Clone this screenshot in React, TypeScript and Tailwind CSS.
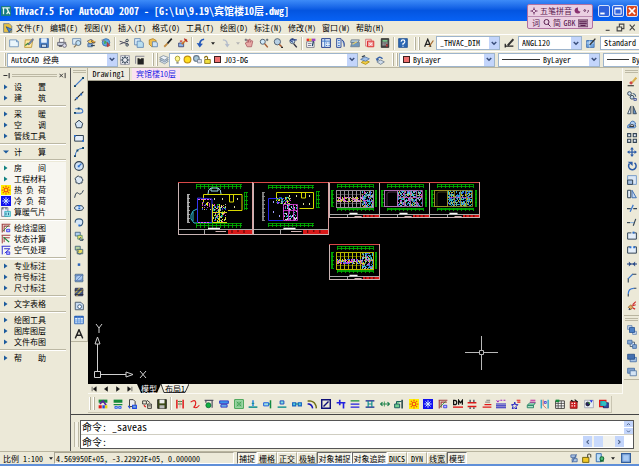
import { type ReactNode } from "react";
import clsx from "clsx";

/* ---------- icons ---------- */

// One stroke or shape: path data, stroke colour, fill colour, stroke width (16-unit grid)
type Shape = [string, string?, string?, number?];
type IconDef = [string, Shape[]];

const N = "none";
const NAVY = "#27408b";
const INK = "#222";
const BLUE = "#3f78c8";

const wide = "M1 3h11l3 3v8H1z";

const fileIcons: IconDef[] = [
  ["New", [[wide, "#5b86b5", "#eaf6fb"], ["M12 3v3h3", "#5b86b5", "#a8d8e8"]]],
  ["Open", [["M2 3h12l-2 12H1z", "#b08820", "#ffe9a0"], ["M14 1L6 10l2 1 7-8z", "#557", "#7fa3c7"], ["M2 12l5-4", "#3a8a3a", N, 2]]],
  ["Save", [["M1 1h14v14H1z", "#2a5aa0", "#4f86cc"], ["M4 1h8v6H4z", "#dbe9f8", "#e8f2fc"], ["M4 10h8v5H4z", "#1c3c70", "#c8dcf0"]]],
];
const printIcons: IconDef[] = [
  ["Plot", [["M4 1h7v6H4z", "#667", "#fff"], ["M1 7h13v5H1z", "#556", "#c6ccda"], ["M9 12a3 3 0 106 0a3 3 0 10-6 0", "#556", "#dde"], ["M3 13h5", "#445", N, 2]]],
  ["Plot preview", [["M1 1h13v9H1z", "#5b7fae", "#dcecf8"], ["M6 8a4 4 0 108 0a4 4 0 10-8 0", "#456", "#bfe0f6"], ["M7 11l-4 4", "#875", N, 2]]],
  ["Publish", [["M2 5l6-3 5 4-6 4z", "#557", "#f4d060"], ["M3 9h7v5H3z", "#335a90", "#8fb4de"], ["M10 3a3 3 0 105 3", "#334", "#e0a030"], ["M8 12h6", "#345", N, 2]]],
  ["Web", [["M2 7a6 6 0 1012 0a6 6 0 10-12 0", "#2a62a8", "#5fa8e0"], ["M5 4q4 0 4 4l-4 2z", N, "#3fae57"], ["M10 7l4 5-4 2z", "#933", "#e04848"], ["M1 3l5 2", "#889", N, 2]]],
];
const editIcons: IconDef[] = [
  ["Cut", [["M1 5l14 5M1 10l13-5", "#556", N, 1.6], ["M11 4a2 2 0 104 0a2 2 0 10-4 0M11 11a2 2 0 104 0a2 2 0 10-4 0", "#345", N, 1.5]]],
  ["Copy", [["M1 1h9v10H1z", "#4f79ac", "#dceefa"], ["M5 5h7l3 3v7H5z", "#4f79ac", "#b8def0"]]],
  ["Paste", [["M2 3l6-2 5 3v8l-7 2-4-4z", "#a87818", "#f0bf50"], ["M7 6h6l2 2v6H7z", "#4f79ac", "#cfe4f6"]]],
  ["Match properties", [["M14 1l-7 8", "#222", N, 2.6], ["M7 9l-5 5", "#c08a40", N, 3]]],
  ["Block editor", [["M1 8h8v6H1z", "#336", "#8cb4e8"], ["M14 2L6 10", "#d07020", N, 2.6], ["M10 1l5 5", "#b02020", N, 2], ["M3 5h4", "#c33", N, 2]]],
];
const undoIcon: IconDef = ["Undo", [["M13 2Q5 3 6 13", "#2458b8", N, 2.8], ["M1 8l5 7 5-6z", N, "#2458b8"]]];
const redoIcon: IconDef = ["Redo", [["M3 3Q11 3 10 13", "#b4bccb", N, 2.2], ["M6 9l4 6 4-5z", N, "#b4bccb"]]];
const viewIcons: IconDef[] = [
  ["Pan", [["M5 14L2 8l2-1 1 1V3h2v4l1-5h2v5l2-3 2 1-2 9z", "#a85860", "#e8a8a4"], ["M1 3h4M3 1v4", "#556", N, 1.3]]],
  ["Zoom realtime", [["M2 6a4 4 0 108 0a4 4 0 10-8 0", "#567", "#cfe8f8", 1.6], ["M9 9l5 6", "#a55a30", N, 2.4], ["M11 3h4M13 1v4", "#345", N, 1.2]]],
  ["Zoom window", [["M2 6a5 5 0 1010 0a5 5 0 10-10 0", "#567", "#b8d0e4", 1.6], ["M10 10l4 4", "#a55a30", N, 2.4], ["M13 15h3", INK, N, 2]]],
  ["Zoom previous", [["M3 5a4 4 0 108 0a4 4 0 10-8 0", "#567", "#cfe8f8", 1.6], ["M9 9l5 6", "#334", N, 2.4], ["M14 3H6M8 1L4 4l4 3", NAVY, N, 1.8]]],
];
const paletteIcons: IconDef[] = [
  ["Properties", [["M1 1h4v4H1z", N, "#e33"], ["M5 1h4v4H5z", N, "#e6c020"], ["M9 1h6v4H9z", N, "#a040c0"], ["M1 6h12v9H1z", "#667", "#fff"], ["M3 9h6M3 12h5", "#557"], ["M12 5l-2 8", "#246", N, 2]]],
  ["DesignCenter", [["M1 1h14v14H1z", NAVY, "#e4effb", 1.6], ["M6 1v14M1 5h14M8 8h2M12 8h2M8 12h2M12 12h2", BLUE, N, 1.6]]],
  ["Tool palettes", [["M1 1h7v14H1z", NAVY, "#dceafa", 1.4], ["M3 4h3M3 8h3M3 12h3", BLUE, N, 1.6], ["M9 3q5 1 4 11", NAVY, "#90b4e4", 1.6]]],
  ["Sheet set manager", [["M2 3h13l-2 4H1z", "#567", "#bcd8ea"], ["M3 7h12v7H1z", "#678", "#7098bc"], ["M4 10l7-4", "#e8d070", N, 2]]],
  ["Markup", [["M1 2h9v11H1z", "#c66", "#fbdcdc"], ["M4 5h10v9H4z", "#d33", "#f0a0a0", 1.6], ["M7 8l4 4M11 8l-4 4", "#fff", N, 1.4]]],
  ["QuickCalc", [["M2 1h12v14H2z", "#222", "#444"], ["M4 3h8v3H4z", N, "#7cc48c"], ["M4 8h2M7 8h2M10 8h2M4 11h2M7 11h2", "#eee", N, 1.6], ["M10 12h2", "#e33", N, 3]]],
];
const helpIcon: IconDef = ["Help", [["M1 1h14v14H1z", "#1b4a8c", "#2d68b4"], ["M5 6q0-3 3-3t3 3q0 2-3 3v2M8 12.500v1.500", "#fff", N, 1.8]]];

const styleText: IconDef = ["Text style", [["M1 14L6 2l5 12M3 10h6", INK, N, 2], ["M15 4l-7 10", "#a86a30", N, 2]]];
const styleDim: IconDef = ["Dimension style", [["M1 13h14M2 9v6", INK, N, 2], ["M15 2L6 12", "#333", N, 3]]];
const styleTable: IconDef = ["Table style", [["M1 4h12v11H1z", "#2b5fa8", "#74a8e0"], ["M1 8h12M6 4v11", "#dbe9f8"], ["M15 1L6 11", "#333", N, 2.2]]];

const gearIcon: IconDef = ["Workspace settings", [["M1 1h14v14H1z", "#889", "#e8eaf0"], ["M4 8a4 4 0 108 0a4 4 0 10-8 0M8 1v3M8 12v3M1 8h3M12 8h3M3 3l2 2M11 11l2 2M13 3l-2 2M5 11l-2 2", "#345", N, 1.5]]];
const myWorkspace: IconDef = ["My workspace", [["M1 2h14M1 2v12", "#778", N, 1.4], ["M4 5h3l1 2 2-2h4v10H4z", N, "#222"]]];
const layersIcon: IconDef = ["Layer manager", [["M1 10l6-3 8 3-6 4z", "#789", "#dfe8f4"], ["M1 7l6-3 8 3-6 4z", "#789", "#b8c8dc"], ["M1 4l6-3 8 3-6 4z", "#789", "#eef3f8"]]];
const layerCurrent: IconDef = ["Make object layer current", [["M2 12l6-4 7 3-6 4z", "#a80", "#f0cc48"], ["M1 7l7-4 7 3-6 4z", "#456ea8", "#a0c0e8"], ["M3 3l5-2", "#345", N, 2]]];
const layerPrev: IconDef = ["Layer previous", [["M3 11l6-3 6 3-6 4z", "#678", "#cfdcec"], ["M12 6Q7 1 3 7", "#3a64a8", N, 2.4], ["M1 5l2 5 4-3z", N, "#3a64a8"]]];

const drawIcons: IconDef[] = [
  ["Line", [["M1 15L15 1", BLUE, N, 2], ["M0 13h3v3H0zM13 0h3v3h-3z", N, "#146"]]],
  ["Construction line", [["M1 15L15 1", INK, N, 1.8], ["M3 10h3v3H3zM10 4h3v3h-3z", N, "#2a70d0"]]],
  ["Polyline", [["M1 13h8q6 0 5-4t-6-3H2", BLUE, N, 1.7], ["M0 11h3v3H0zM6 4h3v3H6z", N, "#146"]]],
  ["Polygon", [["M8 2l6 5-2 7H4L2 7z", "#345", "#d4e4f4", 1.6]]],
  ["Rectangle", [["M1 4h14v9H1z", "#345", "#e4eefa", 1.6], ["M0 3h3v3H0zM13 11h3v3h-3z", N, "#2a70d0"]]],
  ["Arc", [["M2 15Q2 3 14 2", BLUE, N, 1.6], ["M0 13h3v3H0zM4 4h3v3H4zM13 0h3v3h-3z", N, "#146"]]],
  ["Circle", [["M1 8a7 7 0 1014 0a7 7 0 10-14 0", "#345", "#cfe2f6", 1.7], ["M8 8l4-4", BLUE, N, 2], ["M6 7h3v3H6z", N, "#2a70d0"]]],
  ["Revision cloud", [["M4 3q3-3 5 0q4-1 4 3q3 2 0 4q1 4-3 3q-2 3-4 0q-4 1-3-4q-3-3 1-6z", "#345", "#dce8f4", 1.6]]],
  ["Spline", [["M1 14Q3 3 7 7t8-5", "#345", N, 1.6]]],
  ["Ellipse", [["M1 8a7 4 0 1014 0a7 4 0 10-14 0", "#345", "#d4e6f8", 1.6], ["M7 3h3v3H7zM7 7h3v3H7z", N, "#2a70d0"]]],
  ["Ellipse arc", [["M2 9q-1-6 6-6t6 6-6 5", "#357", "#d4e6f8", 1.7], ["M7 12h3v3H7z", N, "#2a70d0"]]],
  ["Insert block", [["M2 2h8v6H2z", "#357", "#b0d0f0"], ["M6 7h7v6H6z", "#486", "#e8e070"], ["M11 10a3 3 0 104 3l-4 2", "#345", "#8ab"]]],
  ["Make block", [["M2 2h8v6H2z", "#357", "#b8d4a0"], ["M5 7h9v7H5z", "#357", "#e8dc60"], ["M8 9a3 3 0 104 3", "#357"]]],
  ["Point", [["M6 7h4v4H6z", N, "#2a62b8"]]],
  ["Hatch", [["M2 2h12v12H2z", "#357", "#a8c8f0"], ["M2 8l6-6M2 14L14 2M8 14l6-6M1 4h14M1 12h14", "#5c7cb4"]]],
  ["Gradient", [["M2 2h12v12H2z", "#224", "#445a88"], ["M2 9l7-7M4 14L14 4", "#c0ad50", N, 2], ["M1 5h14M1 12h14", "#223"]]],
  ["Region", [["M2 2h9l4 4v8H2z", "#456", "#c8dcf2", 1.4], ["M6 9a3 3 0 106 0a3 3 0 10-6 0", "#357", "#fff", 1.4]]],
  ["Table", [["M1 2h14v12H1z", "#2a62b8", "#e4f0fc", 1.4], ["M1 3h14", "#2a62b8", N, 3], ["M1 8h14M1 11h14M6 2v12M10 2v12", "#4a86d8"]]],
  ["Multiline text", [["M2 15L8 1l6 14M4 10h8", INK, N, 2.2]]],
];

const modifyIcons: IconDef[] = [
  ["Erase", [["M15 1L8 9", "#d8b050", N, 3.4], ["M8 8l-3 3", "#d04848", N, 4.4], ["M1 14h10", INK, N, 1.6]]],
  ["Copy object", [["M1 4a3 3 0 106 0a3 3 0 10-6 0M5 10a3 3 0 106 0a3 3 0 10-6 0", "#345", "#cde", 1.5], ["M9 4q5 0 5 5", "#357", N, 1.6], ["M11 12h4v3h-4z", NAVY, "#dce"]]],
  ["Mirror", [["M6 2v12H1z", "#345", "#e4eefa", 1.4], ["M10 2v12h5z", "#345", "#6a96cc", 1.4], ["M8 1v14", "#888"]]],
  ["Offset", [["M1 14q-1-5 4-6q1-6 6-4q4 2 2 5q3 4-1 5z", "#3a6cb0", "#b4d0f0", 1.6], ["M4 12q0-3 4-3t3 3z", INK, "#eef", 1.4]]],
  ["Array", [["M1 1h5v5H1zM10 1h5v5h-5zM1 10h5v5H1zM10 10h5v5h-5z", "#345", "#e8eef8", 1.8]]],
  ["Move", [["M8 2v12M2 8h12", "#2c5ca8", N, 2], ["M8 0l3 4H5zM8 16l3-4H5zM0 8l4-3v6zM16 8l-4-3v6z", N, "#2c5ca8"]]],
  ["Rotate", [["M4 4a6 6 0 108-1", "#2c5ca8", N, 2.4], ["M1 1h8v7z", N, "#2c5ca8"]]],
  ["Scale", [["M1 1h14v14H1z", "#789cc8", "#dce8f6", 1.6], ["M1 8h8v7H1z", "#345", "#a4c0e4", 1.6]]],
  ["Stretch", [["M1 2h5v12H1z", "#345", "#e4eefa", 1.6], ["M8 2l7 12H8z", "#3a6cb0", "#c4d8f0", 1.5]]],
  ["Trim", [["M0 9h6M10 9h6", "#345", N, 1.8], ["M5 14L10 3", "#3a78d0", N, 2]]],
  ["Extend", [["M0 9h5", "#345", N, 1.8], ["M5 9h6", "#78a8e0", N, 1.5], ["M10 14l4-11", "#345", N, 1.8]]],
  ["Break at point", [["M9 3h6v10H1V3h6", "#345", "#e4eefa", 1.6], ["M9 1h3v3H9z", N, "#2a70d0"]]],
  ["Break", [["M11 3h4v10H1V3h4", "#345", "#e4eefa", 1.6], ["M4 2h3v3H4zM10 2h3v3h-3z", N, "#2a70d0"]]],
  ["Join", [["M0 8h16", "#2c4c88", N, 1.8], ["M3 4l4 4-4 4zM13 4L9 8l4 4z", N, "#2c4c88"]]],
  ["Chamfer", [["M2 15V8M8 2h7", "#345", N, 1.8], ["M2 9l7-7", "#3a78d0", N, 1.8]]],
  ["Fillet", [["M2 15v-4M11 2h4", "#345", N, 1.8], ["M2 11Q2 2 11 2", "#3a78d0", N, 2]]],
  ["Explode", [["M2 10l4-4 3 4-3 4z", "#852", "#e8b060"], ["M9 6l5-5M8 8l6-2M9 11l4 2", "#d03030", N, 1.8], ["M3 14l2-2", "#346", N, 2.4]]],
];
const orderIcons: IconDef[] = [
  ["Bring to front", [["M1 1h7v6H1zM9 10h6v5H9z", "#5a7cac", "#c8d8ec"], ["M4 4h8v8H4z", "#234f90", "#4c80c4"]]],
  ["Send to back", [["M5 5h7v7H5z", "#345", "#dce8f6"], ["M1 2h7v6H1zM9 9h6v6H9z", "#3a64a0", "#88aad4"]]],
  ["Bring above", [["M5 7h10v7H5z", "#3a64a0", "#a8c4e4"], ["M1 2h11v8H1z", "#1f4680", "#4470b0"]]],
  ["Send under", [["M1 2h11v8H1z", "#3a64a0", "#7ea0cc"], ["M5 6h10v8H5z", "#456c9c", "#d4e4f4"]]],
];

const R = "#e01818";
const G = "#158a3a";
const T = "#0b8c8c";
const DB = "#1414b8";
const K = "#111";

const hvacFileIcons: IconDef[] = [
  ["Layer colours", [["M1 1h14v5H1z", N, G], ["M3 8l5-5 5 7", "#5a20a0", N, 2.5], ["M1 10h5v5H1z", N, R], ["M7 10h4v5H7z", N, "#2048e0"], ["M11 10h4v5h-4z", N, "#e8d010"]]],
  ["Layer isolate", [["M1 1h14v5H1z", N, G], ["M1 8h14v2H1z", N, G], ["M3 12h4v3H3zM9 12h4v3H9z", "#2048e0", "#9cf"]]],
  ["Edit sheet", [["M4 1h6l3 3v8H4z", K, "#eee"], ["M2 11l3 4M9 10h6v5H9z", "#2048e0", "#7ad", 1.8]]],
  ["Convert", [["M1 3h6v5H1z", K, "#eed", 1.2], ["M8 2l5 4M9 8h6v7H9zM10 11h4", K, N, 1.2], ["M3 10l3 3", R, N, 2]]],
  ["Save sheet", [["M1 1h14v14H1z", K, "#3c4a18"], ["M4 1h8v6H4z", N, "#eee"], ["M4 10h8v5H4z", N, "#bbb"]]],
];
const hvacIcons: IconDef[] = [
  ["Pipe layout", [["M3 1v14M13 1v14", R, N, 2.4], ["M5 8h6M5 4h6", G, N, 1.8], ["M8 2v12", "#e88"]]],
  ["Flexible pipe", [["M1 5q7-5 8 0t-3 8q4 3 9-3", R, N, 1.8]]],
  ["Valve", [["M1 2h14M3 2v4M13 2v12", "#556", N, 2], ["M3 10a4 4 0 108 0a4 4 0 10-8 0", "#063", "#10b040"]]],
  ["Duct", [["M1 3h14v4H1z", DB, "#40a0f0"], ["M3 9h10v4H3z", DB, "#70b8f0"]]],
  ["Diffuser", [["M1 1h14v14H1z", "#3fa050", "#a5dcae", 1.6], ["M4 4l8 8M12 4l-8 8M5 5h6v6H5z", "#3fa050"]]],
  ["Riser", [["M1 13h14", T, N, 2.4], ["M8 2v9", "#2080e0", N, 2.4], ["M6 7h4", T, N, 1.6]]],
  ["Side branch", [["M1 6h8v5H1z", "#2060e0", "#a0e0e0", 1.6], ["M12 2v13", G, N, 2.4], ["M9 8h3", T, N, 2]]],
  ["Terminal", [["M1 13h14", T, N, 2.2], ["M5 3h6v5H5z", "#2050c0", "#80e0e0", 1.6]]],
  ["Coupler", [["M1 6h5v5H1zM10 6h5v5h-5z", "#1860c0", "#50d0e0", 1.8], ["M6 8h4", T, N, 2]]],
  ["Elbow", [["M1 3h4q9 1 10 12", "#707018", N, 2.4], ["M1 8h2q5 1 6 7", DB, N, 2.4]]],
  ["Damper", [["M1 1h14v14H1z", "#101078", N, 2.6], ["M4 12l8-8", "#101078", N, 2.2]]],
  ["Tee", [["M1 6h14M6 1v9M12 6v9", "#2020e0", N, 2.6]]],
  ["Parallel", [["M1 3h14", G, N, 2], ["M1 8h14M1 13h14", "#2020e0", N, 2]]],
  ["Crossover", [["M1 3h14M1 13h14", "#102090", N, 2], ["M5 3v10M11 3v10M5 8h6", T, N, 1.8]]],
  ["Flow arrows", [["M1 8h14M4 5L1 8l3 3M12 5l3 3-3 3", "#208050", N, 1.7], ["M7 4v8", G]]],
  ["Fan coil", [["M1 8h8v6H1zM4 8V4h8", "#206060", "#70d090", 1.6], ["M13 1v14", "#204040", N, 2.4]]],
  ["Heat load", [["M0 0h16v16H0z", N, "#ffee00"], ["M5 8a3 3 0 106 0a3 3 0 10-6 0M8 1v2M8 13v2M1 8h2M13 8h2M3 3l1.500 1.500M11.500 11.500L13 13M13 3l-1.500 1.500M4.500 11.500L3 13", "#f05010", N, 2]]],
  ["Cooling load", [["M0 0h16v16H0z", N, "#1010f0"], ["M8 2v12M2 8h12M4 4l8 8M12 4l-8 8", "#d8f0ff", N, 1.5]]],
  ["Enthalpy chart", [["M1 2h14M2 2v13M5 14V5h9", "#a04040", N, 1.8], ["M3 13L12 4", G], ["M9 10h5v4H9z", "#2020e0", "#bbf"]]],
  ["Diameter label", [["M1 2v7h2q3 0 3-3.500T3 2zM9 9V2l3 4 3-4v7", K, N, 2], ["M0 13h16", R, N, 2.2]]],
  ["Elevation label", [["M1 6h14M1 12h14", R, N, 2.4], ["M5 1v4M11 1v4M5 13v3M11 13v3", "#345", N, 2]]],
  ["Slope label", [["M1 13h14M4 9h11", R, N, 2], ["M5 5h8M7 2h6", "#777", N, 1.5]]],
  ["Pipe labels", [["M1 2l2 3 2-3M7 2h3M12 2h3", "#a020c0", N, 1.6], ["M0 8h16M0 11h16M0 14h16", "#2020c0", N, 1.8]]],
  ["Star label", [["M6 5l1 4h4l-3 3 1 4-4-2-3 2 1-4-2-3h4z", "#2020c0", N, 1.6], ["M9 2h6M10 5h5", R, N, 1.8]]],
  ["Equipment label", [["M3 9l3-3h9l-3 4H3zM2 10h10v4H2z", "#208060", "#b0e0c8", 1.4], ["M7 2h8M6 5h9", "#c020a0", N, 1.6]]],
  ["System diagram", [["M2 1v14M13 1v14", "#20a0c0", N, 2], ["M5 1v9l5 5", "#d04040"], ["M7 4h3v3H7z", "#2020e0", N]]],
  ["Material table", [["M1 3h14v12H1z", K, "#fff"], ["M1 7h14M1 11h14M5 3v12M10 3v12", "#333"], ["M1 1h6v4H1z", N, G]]],
  ["Calendar", [["M2 4h11v11H2z", "#811", "#d02020"], ["M4 7h2M8 7h2M4 11h2M8 11h2", "#fff", N, 1.8], ["M3 2l4 2M9 1l5 4", K, N, 2]]],
  ["Section", [["M1 2h14v12H1z", "#99a", "#e8eef8"], ["M3 8a3 3 0 106 0a3 3 0 10-6 0", K, "#226"], ["M9 2h5l-2 4z", N, "#2030e0"], ["M7 6l3 1", "#3a3", N, 2]]],
  ["Render", [["M1 2h10v10H1z", R, "#20a8b8", 2], ["M7 6h8v8H7z", "#101060", "#3050a0"], ["M4 7a4 4 0 108 0a4 4 0 10-8 0", N, "#30c0c0"]]],
];

const trayIcons: IconDef[] = [
  ["Communication center", [["M3 3h8v4H3zM5 9h8v5H5z", "#4a6ca0", "#b0c8e8", 1.4], ["M12 2l-7 13", "#4a6ca0", N, 1.6]]],
  ["Toolbar lock", [["M1 7h10v8H1z", "#6a5a00", "#f0c828", 1.4], ["M9 7V3q2-3 5 0v4", "#554", N, 1.8]]],
  ["Plot status", [["M2 1h8v13H2z", "#2b62a8", "#b8dcf8", 1.4], ["M8 9a3 3 0 106 0a3 3 0 10-6 0M8 13h6", "#186a38", "#50c078", 1.8]]],
];

function Icon({ shapes, className = "size-[10px]" }: { shapes: Shape[]; className?: string }) {
  return (
    <svg viewBox="0 0 16 16" className={clsx("block shrink-0", className)} aria-hidden="true">
      {shapes.map(([d, stroke = N, fill = N, width = 1.2], i) => (
        <path key={i} d={d} stroke={stroke} fill={fill} strokeWidth={width} />
      ))}
    </svg>
  );
}

function ToolButton({ icon, className }: { icon: IconDef; className?: string }) {
  return (
    <button type="button" aria-label={icon[0]} className={clsx("flex items-center justify-center", className)}>
      <Icon shapes={icon[1]} />
    </button>
  );
}

function ToolGroup({ icons, className }: { icons: IconDef[]; className: string }) {
  return (
    <div className={clsx("flex shrink-0", className)}>
      {icons.map((icon) => (
        <ToolButton key={icon[0]} icon={icon} className="flex-1" />
      ))}
    </div>
  );
}

function Grip() {
  return <span className="mx-px h-[13px] w-[2px] shrink-0 border-l border-r border-l-white border-r-[#b5b19c]" />;
}

function Divider() {
  return <span className="mx-px h-[13px] w-[2px] shrink-0 border-l border-r border-l-[#c5c1ac] border-r-white" />;
}

function Caret({ faded }: { faded?: boolean }) {
  return (
    <svg viewBox="0 0 6 4" className="h-[3px] w-[4px] shrink-0" aria-hidden="true">
      <path d="M0 0h6L3 4z" fill={faded ? "#b4b4b4" : "#222"} />
    </svg>
  );
}

/* ---------- combo boxes ---------- */

function Combo({ label, value, className, children }: { label: string; value: string; className: string; children?: ReactNode }) {
  return (
    <div className={clsx("relative flex h-[14px] shrink-0 items-center border border-[#9db4cc] bg-white pl-[3px]", className)}>
      {children}
      <select aria-label={label} className="h-full min-w-0 flex-1 appearance-none bg-transparent pr-[12px] text-[8px] leading-[12px] outline-none">
        <option>{value}</option>
      </select>
      <span className="pointer-events-none absolute top-0 right-0 flex h-full w-[10px] items-center justify-center bg-[#c3d5fb]">
        <svg viewBox="0 0 8 6" className="h-[5px] w-[6px]" aria-hidden="true">
          <path d="M1 1l3 3 3-3" fill="none" stroke="#3a4f7c" strokeWidth="2" />
        </svg>
      </span>
    </div>
  );
}

function Swatch() {
  return <span className="mr-[3px] size-[7px] shrink-0 border border-[#402020] bg-[#ef7070]" />;
}

/* ---------- drawing sheets ---------- */

function makeRandom(seed: number) {
  let s = seed;
  return () => {
    s = (s * 16807) % 2147483647;
    return s / 2147483647;
  };
}

function Speckle({ x, y, w, h, colors, seed, density = 0.6 }: { x: number; y: number; w: number; h: number; colors: string[]; seed: number; density?: number }) {
  const random = makeRandom(seed);
  const dots: ReactNode[] = [];
  for (let j = 0; j < h; j += 1) {
    for (let i = 0; i < w; i += 1) {
      if (random() < density) {
        const color = colors[Math.floor(random() * colors.length)];
        const tall = random() > 0.7 && j < h - 1;
        dots.push(<rect key={`${i}-${j}`} x={x + i} y={y + j} width={1} height={tall ? 2 : 1} fill={color} />);
      }
    }
  }
  return <g>{dots}</g>;
}

// Rows of dimension ticks, horizontal or vertical
function Dimensions({ x, y, w, h, color = "#00b000" }: { x: number; y: number; w: number; h: number; color?: string }) {
  const horizontal = w > h;
  const long = horizontal ? w : h;
  const short = horizontal ? h : w;
  const lines = [0.5, Math.floor(short / 2) + 0.5];
  let d = "";
  for (const l of lines) d += horizontal ? `M${x} ${y + l}h${w}` : `M${x + l} ${y}v${h}`;
  for (let i = 0; i <= long; i += 4) d += horizontal ? `M${x + i + 0.5} ${y}v${h}` : `M${x} ${y + i + 0.5}h${w}`;
  return <path d={d} stroke={color} strokeWidth="1" strokeOpacity="0.85" fill="none" />;
}

function Sheet({ x, y, w, h, children }: { x: number; y: number; w: number; h: number; children: ReactNode }) {
  const strip = h - (h > 40 ? 5 : 3);
  return (
    <g transform={`translate(${x} ${y})`}>
      {children}
      <path d={`M1 ${strip - 0.5}H${w - 1}M${Math.round(w * 0.35) + 0.5} ${strip}V${h}`} stroke="#a8a8a8" />
      <rect x={Math.round(w * 0.66)} y={strip} width={Math.round(w * 0.33)} height={h - strip} fill="#d81818" />
      <path d={`M${w * 0.72} ${strip}v3M${w * 0.8} ${strip}v2M${w * 0.88} ${strip}v3`} stroke="#400" />
      <path d={`M${w * 0.4} ${strip - 1.5}h${w * 0.16}`} stroke="#f4f4f4" strokeWidth="1.500" />
      <path d={`M${w * 0.5} ${strip + 1.5}h${w * 0.14}`} stroke="#d0b0b0" />
      <rect x="0.5" y="0.5" width={w - 1} height={h - 1} fill="none" stroke="#c9b4b4" />
      <path d={`M0 0.5H${w}`} stroke="#d84848" />
      <path d={`M${w - 0.5} 0V${h}`} stroke="#d8a0a0" />
    </g>
  );
}

const MIX = ["#d83cd8", "#d8d828", "#28b8c8", "#b0b0b0", "#3048e0", "#209838", "#e8e850"];
const OFFICE = ["#c850c8", "#28b8d0", "#4068e0", "#60c8d8", "#b0a8c0", "#b8b838", "#208890"];

function TowerSheetA() {
  return (
    <Sheet x={90} y={101} w={75} h={53}>
      <Dimensions x={18} y={2} w={46} h={5} />
      <path d="M30 12q0-5 3-6h7q3 1 3 6M33 6v3h7V6" stroke="#a0dce8" fill="none" />
      <path d="M25.500 20v-7.500h38.500v16h-14M51.500 13v7h4v-7" stroke="#d8d800" fill="none" />
      <path d="M36 17h1M44 17h1M59 17h1M43 25h1M56 25h1M36 25h1" stroke="#d8d8a0" strokeWidth="2" />
      <Dimensions x={66} y={10} w={4} h={18} />
      <Dimensions x={9} y={12} w={3} h={28} color="#b8b8b8" />
      <path d="M19.500 16v24.500H34V17z" stroke="#3434f0" fill="none" />
      <path d="M20 17.500h13M20 40.500h12" stroke="#f060f0" strokeDasharray="2 1" />
      <Speckle x={24} y={20} w={9} h={8} colors={["#e0e030", "#c040c0", "#4050e0"]} seed={11} density={0.3} />
      <Speckle x={34} y={22} w={14} h={18} colors={MIX} seed={23} density={0.5} />
      <path d="M34.500 22v18.500h14.500M34 30.500h15M41.500 22v18" stroke="#d8d820" />
      <path d="M19 27l-4 2-2 4v4l3 4h3M15 30v9" stroke="#30b8d0" fill="none" />
      <Dimensions x={18} y={41} w={46} h={5} />
    </Sheet>
  );
}

function TowerSheetB() {
  return (
    <Sheet x={165} y={101} w={76} h={53}>
      <Dimensions x={15} y={3} w={46} h={4} />
      <path d="M23.500 16v-5.500h37v16h-14M48.500 11v5h4v-5" stroke="#d8d800" fill="none" />
      <path d="M36 14h1M43 14h1M56 14h1M50 22h1M56 22h1" stroke="#d8d8a0" strokeWidth="2" />
      <Dimensions x={63} y={9} w={4} h={17} />
      <Dimensions x={9} y={10} w={3} h={29} color="#909090" />
      <path d="M30 38.500H15.500v-22H30" stroke="#2424e8" fill="none" />
      <path d="M20 20h1M20 30h1M26 34h1" stroke="#a0a0ff" strokeWidth="2" />
      <Speckle x={23} y={15} w={15} h={7} colors={MIX} seed={37} density={0.5} />
      <Speckle x={30} y={22} w={14} h={17} colors={["#28b8c8", "#c8d8e0", "#c040c0"]} seed={53} density={0.35} />
      <path d="M30.500 22.500h14v16h-14zM30 28.500h14M35.500 22v16M40.500 22v16" stroke="#d83cd8" strokeOpacity="0.8" fill="none" />
      <Dimensions x={15} y={41} w={46} h={4} />
    </Sheet>
  );
}

function FloorFrame() {
  return (
    <>
      <Dimensions x={8} y={2} w={36} h={4} />
      <Dimensions x={2} y={8} w={3} h={16} />
      <Dimensions x={46} y={8} w={2} h={16} />
      <Dimensions x={8} y={26} w={36} h={3} />
    </>
  );
}

function RoomSheet({ x, y, wall, seed, colors }: { x: number; y: number; wall: string; seed: number; colors: string[] }) {
  return (
    <Sheet x={x} y={y} w={51} h={36}>
      <FloorFrame />
      <rect x="7.500" y="8.500" width="37" height="17" fill="none" stroke={wall} />
      <path d="M11.500 8v17M15.500 8v17M19.500 8v17M23.500 8v17M27.500 8v17M31.500 8v17" stroke={wall} />
      <path d="M8 12.500h27M8 21.500h27" stroke={wall} strokeOpacity="0.5" />
      <Speckle x={8} y={15} w={27} h={5} colors={colors} seed={seed} density={0.65} />
      <Speckle x={33} y={9} w={11} h={16} colors={OFFICE} seed={seed + 7} density={0.6} />
    </Sheet>
  );
}

function HallSheet({ x, y, wall, seed, colors }: { x: number; y: number; wall: string; seed: number; colors: string[] }) {
  return (
    <Sheet x={x} y={y} w={51} h={36}>
      <FloorFrame />
      <Speckle x={19} y={8} w={24} h={17} colors={colors} seed={seed} density={0.6} />
      <path d="M20 15.500h23" stroke="#c850c8" strokeOpacity="0.7" />
      <path d="M25.500 8v17M31.500 8v17M37.500 8v17M19 8.500h24.500v16H19" stroke={wall} strokeOpacity="0.8" />
      <rect x="5.500" y="8.500" width="13" height="16" fill="#000" stroke={wall} />
      <path d="M8 24V12q0-2 3-2h7" stroke={wall} strokeOpacity="0.4" fill="none" />
    </Sheet>
  );
}

function ModelSpace() {
  return (
    <div className="relative min-h-[303px] flex-1 overflow-hidden bg-black">
      <svg className="absolute inset-0 h-full w-full" role="img" aria-label="Drawing sheets" fill="none">
        <TowerSheetA />
        <TowerSheetB />
        <RoomSheet x={241} y={101} wall="#989098" seed={71} colors={["#d83cd8", "#d890d0", "#b8b8b8", "#c8c830"]} />
        <HallSheet x={291} y={101} wall="#b070b0" seed={89} colors={OFFICE} />
        <HallSheet x={341} y={101} wall="#989028" seed={97} colors={["#2890c8", "#3058d8", "#58b0c0", "#b8b838", "#28c0c8"]} />
        <RoomSheet x={241} y={163} wall="#b8b800" seed={113} colors={["#d83cd8", "#d8d830", "#4070e0", "#b8b8b8"]} />
        <path d="M377 271.500h14M396 271.500h14M393.500 255v14M393.500 274v15M391.500 269.500h4v4h-4z" stroke="#b8b8b8" />
      </svg>
      <svg viewBox="0 0 64 66" className="absolute bottom-0 left-0 h-[66px] w-[64px]" aria-hidden="true" fill="none" stroke="#d0d0d0">
        <path d="M6.500 53.500h6v6h-6zM9.500 53V26M13 56.500h25M7 26l2.500-7 2.500 7zM38 54v5l7-2.500zM8 6l3 4v5M14 6l-3 4M52 53l6 7M58 53l-6 7" />
      </svg>
    </div>
  );
}

/* ---------- left menu ---------- */

type MenuEntry = { text: string; mark?: Shape[]; open?: boolean };

const arrowBlue: Shape[] = [["M4 3l7 5-7 5z", N, "#1c5a9c"]];
const arrowGreen: Shape[] = [["M4 3l7 5-7 5z", N, "#108080"]];
const arrowDown: Shape[] = [["M2 5h12l-6 6z", N, "#1c5a9c"]];
const radiator: Shape[] = [["M1 1h10v14H1z", "#667", "#eef"], ["M3 1v3M8 1v3", K], ["M6 7h9v8H6z", "#20a8b8", "#a0e8f0"], ["M8 9v4M12 9v4", "#147"]];
const processIcon: Shape[] = [["M1 2h14M2 2v13M5 6h9L6 13", "#3333d0", N, 1.6], ["M9 11h5v4H9z", "#2020e0", "#bbf"]];
const stateIcon: Shape[] = [["M1 2h14M2 2v13M5 13V6h9", "#a04040", N, 1.6], ["M4 5l9 8", G, N, 2]];

const topSections: MenuEntry[][] = [
  [{ text: "设置" }, { text: "建筑" }],
  [{ text: "采暖" }, { text: "空调" }, { text: "管线工具" }],
  [{ text: "计算", mark: arrowDown, open: true }],
];
const openSections: MenuEntry[][] = [
  [
    { text: "房间", mark: arrowGreen },
    { text: "工程材料", mark: arrowGreen },
    { text: "热负荷", mark: hvacIcons[16][1] },
    { text: "冷负荷", mark: hvacIcons[17][1] },
    { text: "算暖气片", mark: radiator },
  ],
  [
    { text: "绘焓湿图", mark: hvacIcons[18][1] },
    { text: "状态计算", mark: stateIcon },
    { text: "空气处理", mark: processIcon },
  ],
];
const lowerSections: MenuEntry[][] = [
  [{ text: "专业标注" }, { text: "符号标注" }, { text: "尺寸标注" }],
  [{ text: "文字表格" }],
  [{ text: "绘图工具" }, { text: "图库图层" }, { text: "文件布图" }],
  [{ text: "帮助" }],
];

function MenuSection({ entries, last }: { entries: MenuEntry[]; last?: boolean }) {
  return (
    <>
      {entries.map(({ text, mark, open }) => (
        <button key={text} type="button" aria-expanded={open} className="flex h-[11px] w-full items-center pl-px">
          <Icon shapes={mark ?? arrowBlue} className={mark && mark !== arrowDown && mark !== arrowGreen ? "size-[10px]" : "mx-[1px] size-[8px]"} />
          <span className="ml-[3px] flex w-[32px] justify-between text-[8px] leading-[11px]">
            {[...text].map((c, i) => (
              <span key={i}>{c}</span>
            ))}
          </span>
        </button>
      ))}
      {!last && (
        <div className="flex h-[5px] items-center">
          <span className="h-[2px] w-full border-t border-b border-t-[#bcb8a4] border-b-white" />
        </div>
      )}
    </>
  );
}

function SideMenu() {
  return (
    <nav aria-label="THvac" className="w-[71px] shrink-0 border-r border-[#555] pt-[3px] pr-[4px]">
      <div className="mb-[2px] flex h-[8px] items-center gap-[2px] pl-[3px]">
        <button type="button" aria-label="Dock">
          <Icon shapes={[["M1 8h9M14 2v12", "#333", N, 2.4]]} className="size-[7px]" />
        </button>
        <span className="h-[3px] flex-1 border-t border-b border-[#bcb8a4]" />
        <button type="button" aria-label="Close menu">
          <Icon shapes={[["M1 4l8 8M9 4l-8 8M14 2v12", "#333", N, 2.2]]} className="size-[7px]" />
        </button>
      </div>
      {topSections.map((s, i) => (
        <MenuSection key={i} entries={s} />
      ))}
      <div className="bg-[#f7f6f0]">
        {openSections.map((s, i) => (
          <MenuSection key={i} entries={s} />
        ))}
      </div>
      {lowerSections.map((s, i) => (
        <MenuSection key={i} entries={s} last={i === lowerSections.length - 1} />
      ))}
    </nav>
  );
}

/* ---------- window chrome ---------- */

const menus = ["文件(F)", "编辑(E)", "视图(V)", "插入(I)", "格式(O)", "工具(T)", "绘图(D)", "标注(N)", "修改(M)", "窗口(W)", "帮助(H)"];

function TitleBar() {
  const box = "flex size-[12px] items-center justify-center rounded-[2px] border border-[#d6e2fb]";
  return (
    <header className="flex h-[21px] items-center gap-[3px] bg-gradient-to-b from-[#3d8bf8] via-[#0455e0] to-[#0862f5] pr-px pl-[1px]">
      <Icon shapes={[["M0 0h16v16H0z", N, "#1a7d80"], ["M2 3h12M4 3v10M9 3l5 10M9 13l3-5", "#e6f6f0", N, 2]]} />
      <h1 className="flex-1 truncate text-[10px] leading-[14px] font-bold whitespace-pre text-white">{"THvac7.5 For AutoCAD 2007 - [G:\\lu\\9.19\\宾馆楼10层.dwg]"}</h1>
      <div className="flex gap-[2px]">
        <button type="button" aria-label="Minimize" className={clsx(box, "bg-[#2f62dc]")}>
          <Icon shapes={[["M2 12h7", "#fff", N, 3]]} />
        </button>
        <button type="button" aria-label="Maximize" className={clsx(box, "bg-[#2f62dc]")}>
          <Icon shapes={[["M3 4h10v9H3z", "#fff", N, 1.6], ["M3 4h10", "#fff", N, 3]]} />
        </button>
        <button type="button" aria-label="Close" className={clsx(box, "bg-[#dc4a22]")}>
          <Icon shapes={[["M3 3l10 10M13 3L3 13", "#fff", N, 2.4]]} />
        </button>
      </div>
    </header>
  );
}

// Floating input-method bar over the title and menu rows
function InputMethodBar() {
  return (
    <div className="absolute top-[4px] right-[46px] z-10 w-[66px] rounded-[2px] border border-[#b070a0] bg-[#eacfe2] text-[8px] leading-[11px] whitespace-nowrap text-[#5a2050]">
      <div className="flex h-[12px] items-center justify-between border-b border-[#b98ab0] px-[2px]">
        <Icon shapes={[["M8 1v14M1 8h14", "#6a2a60", N, 2], ["M4 8l4-4 4 4-4 4z", "#6a2a60", "#eacfe2", 1.4]]} className="size-[8px]" />
        <span>五笔拼音</span>
        <Icon shapes={[["M9 1a7 7 0 106 9q-7 1-6-9z", N, "#8a3070"]]} className="size-[7px]" />
        <Icon shapes={[["M2 8a2 2 0 104 0a2 2 0 10-4 0M12 7v3l-2 3", "#5a2050", N, 2]]} className="size-[7px]" />
      </div>
      <div className="flex h-[11px] items-center justify-between px-[4px]">
        <span>词</span>
        <Icon shapes={[["M2 6a5 5 0 1010 0a5 5 0 10-10 0M10 10l5 5", "#5a2050", N, 2]]} className="size-[8px]" />
        <span>简</span>
        <span>GBK</span>
        <Icon shapes={[["M0 3h16v11H0z", "#6a3a60", "#b088a8", 1.4], ["M2 6h12M2 9h12M4 12h8", "#5a2050", N, 1.6]]} />
      </div>
    </div>
  );
}

function MenuBar() {
  return (
    <nav aria-label="Menu bar" className="flex h-[13px] items-center pr-[2px] pl-[3px]">
      <Icon shapes={[["M1 1h9l4 4v10H1z", "#58728c", "#e8c040"], ["M5 6l9 4-4 5z", "#1c4c8c", "#4c88cc"]]} />
      <div className="ml-[3px] flex flex-1 gap-[6px]">
        {menus.map((m) => (
          <button key={m} type="button" className="w-[28px] text-[8px] leading-[12px]">
            {m}
          </button>
        ))}
      </div>
      <div className="flex gap-[3px]">
        {([["Minimize drawing", "M3 13h7"], ["Restore drawing", "M2 7h8v7H2zM6 6V2h8v8h-3"], ["Close drawing", "M3 3l9 10M12 3L3 13"]] as const).map(([label, d]) => (
          <button key={label} type="button" aria-label={label}>
            <Icon shapes={[[d, "#444", N, 2]]} className="size-[9px]" />
          </button>
        ))}
      </div>
    </nav>
  );
}

function StandardToolbar() {
  return (
    <div className="flex h-[17px] items-center overflow-hidden border-t border-white">
      <div className="flex shrink-0 items-center pl-[3px]">
        <Grip />
        <ToolGroup icons={fileIcons} className="w-[44px]" />
        <Divider />
        <ToolGroup icons={printIcons} className="w-[58px]" />
        <Divider />
        <ToolGroup icons={editIcons} className="w-[73px]" />
        <Divider />
        <div className="flex w-[48px] items-center justify-between px-[2px]">
          <ToolButton icon={undoIcon} />
          <Caret />
          <ToolButton icon={redoIcon} />
          <Caret faded />
        </div>
        <ToolGroup icons={viewIcons} className="w-[58px]" />
        <Divider />
        <ToolGroup icons={paletteIcons} className="w-[88px]" />
        <Divider />
        <ToolButton icon={helpIcon} className="w-[14px]" />
      </div>
      <div className="flex shrink-0 items-center pl-[3px]">
        <Grip />
        <Grip />
        <ToolButton icon={styleText} className="w-[15px]" />
        <Combo label="Text style" value="_THVAC_DIM" className="w-[64px]" />
        <ToolButton icon={styleDim} className="w-[18px]" />
        <Combo label="Dimension style" value="ANGL120" className="w-[64px]" />
        <ToolButton icon={styleTable} className="w-[18px]" />
        <Combo label="Table style" value="Standard" className="w-[64px]" />
      </div>
    </div>
  );
}

function LayerToolbar() {
  return (
    <div className="flex h-[17px] items-center overflow-hidden border-t border-b border-t-white border-b-[#b9b5a0] pl-[3px]">
      <Grip />
      <Combo label="Workspace" value="AutoCAD 经典" className="w-[111px]" />
      <ToolGroup icons={[gearIcon, myWorkspace]} className="w-[29px]" />
      <span className="w-[4px] shrink-0" />
      <Grip />
      <Grip />
      <ToolButton icon={layersIcon} className="w-[18px]" />
      <Combo label="Layer" value="J03-DG" className="w-[189px]">
        <span className="mr-[2px] flex shrink-0 items-center gap-px">
          <Icon shapes={[["M4 6a4 4 0 118 0q0 2-2 5H6q-2-3-2-5z", "#a09020", "#fff890", 1.5], ["M6 14h4", "#777", N, 2.5]]} className="size-[9px]" />
          <Icon shapes={[["M2 8a6 6 0 1012 0a6 6 0 10-12 0", "#c09010", "#ffe020", 2]]} className="size-[9px]" />
          <Icon shapes={[["M1 6a5 5 0 1010 0a5 5 0 10-10 0", "#678", "#a8c8d8", 2], ["M8 8h7v6H8z", "#678", "#dde"]]} className="size-[9px]" />
          <Icon shapes={[["M3 8h10v7H3z", "#887010", "#f0e040", 1.5], ["M8 8V4q-2-3-5 0v2", "#887010", N, 2]]} className="size-[9px]" />
        </span>
        <Swatch />
      </Combo>
      <ToolGroup icons={[layerCurrent, layerPrev]} className="w-[29px]" />
      <span className="w-[4px] shrink-0" />
      <Grip />
      <Grip />
      <Combo label="Colour" value="ByLayer" className="w-[96px]">
        <Swatch />
      </Combo>
      <span className="w-[3px] shrink-0" />
      <Combo label="Linetype" value="ByLayer" className="w-[102px]">
        <span className="mr-[3px] h-px w-[38px] shrink-0 bg-[#333]" />
      </Combo>
      <span className="w-[3px] shrink-0" />
      <Combo label="Lineweight" value="ByLayer" className="w-[96px]">
        <span className="mr-[3px] h-px w-[22px] shrink-0 bg-[#333]" />
      </Combo>
    </div>
  );
}

function VerticalGrip() {
  return <span className="my-[2px] h-[3px] w-[13px] border-t border-b border-[#bcb8a4]" />;
}

function DrawBar() {
  return (
    <div className="flex w-[17px] shrink-0 flex-col items-center self-start border-r border-b border-[#b9b5a0]">
      <VerticalGrip />
      {drawIcons.map((icon) => (
        <ToolButton key={icon[0]} icon={icon} className="h-[14px]" />
      ))}
    </div>
  );
}

function ModifyBar() {
  return (
    <div className="flex w-[15px] shrink-0 flex-col items-center self-start border-b border-[#b9b5a0]">
      <VerticalGrip />
      {modifyIcons.map((icon) => (
        <ToolButton key={icon[0]} icon={icon} className="h-[14px]" />
      ))}
      <span className="mt-[2px] w-full border-t border-[#b9b5a0]" />
      <VerticalGrip />
      {orderIcons.map((icon) => (
        <ToolButton key={icon[0]} icon={icon} className="h-[14px]" />
      ))}
    </div>
  );
}

function DocumentTabs() {
  return (
    <div className="flex h-[13px] shrink-0 items-stretch text-[8px] leading-[12px]">
      <button type="button" className="w-[42px] border-r border-b border-[#a5a28f] bg-[#efece0]">
        Drawing1
      </button>
      <button type="button" className="mb-px ml-[2px] w-[48px] bg-[#fbe3f1] text-[#1c1ce8]">
        宾馆楼10层
      </button>
    </div>
  );
}

function LayoutTabs() {
  const steps = [
    ["First layout", "M3 2v12M14 2v12L6 8z"],
    ["Previous layout", "M12 2v12L4 8z"],
    ["Next layout", "M4 2v12l8-6z"],
    ["Last layout", "M13 2v12M2 2v12l8-6z"],
  ];
  return (
    <div className="flex h-[10px] shrink-0 items-center border-b border-[#fbfaf4] text-[8px] leading-[9px]">
      {steps.map(([label, d]) => (
        <button key={label} type="button" aria-label={label} className="flex w-[12px] justify-center">
          <Icon shapes={[[d, K, K, 1.5]]} className="size-[6px]" />
        </button>
      ))}
      <button type="button" className="relative ml-px h-[9px] w-[24px]">
        <svg viewBox="0 0 24 9" className="absolute inset-0 h-full w-full" aria-hidden="true">
          <path d="M0 0h24l-4 9H4z" fill="#000" />
        </svg>
        <span className="relative block text-white">模型</span>
      </button>
      <button type="button" className="relative h-[9px] w-[28px]">
        <svg viewBox="0 0 28 9" className="absolute inset-0 h-full w-full" aria-hidden="true">
          <path d="M0 0l3 8.500h21L28 0" fill="#f4f2e8" stroke="#333" />
        </svg>
        <span className="relative block">布局1</span>
      </button>
    </div>
  );
}

function HvacToolbar() {
  return (
    <div className="ml-[17px] flex h-[20px] shrink-0 items-center overflow-hidden">
      <div className="flex h-[17px] items-center border-r border-b border-[#c9c5b2]">
        <Grip />
        <Grip />
        <ToolGroup icons={hvacFileIcons} className="w-[73px]" />
        <Divider />
        <ToolGroup icons={hvacIcons} className="w-[438px]" />
      </div>
    </div>
  );
}

function CommandWindow() {
  const chip = "flex items-center justify-center bg-[#c3d5fb]";
  return (
    <div className="flex shrink-0 border-t border-[#444] pt-[5px] pb-[2px]">
      <span className="my-[2px] mr-px ml-[3px] w-[5px] shrink-0 border-r border-l border-[#bcb8a4] bg-[#f4f2e8]" />
      <div className="mr-[5px] min-w-0 flex-1 border border-[#555] bg-white text-[10px]">
        <div className="flex h-[14px] border-b border-[#d0cec2]">
          <output className="flex-1 pl-px leading-[12px] whitespace-pre">命令: _saveas</output>
          <div className="flex w-[9px] flex-col gap-px">
            <button type="button" aria-label="Scroll up" className={clsx(chip, "flex-1")}>
              <Icon shapes={[["M3 10l5-5 5 5", "#4d6185", N, 3]]} className="size-[5px]" />
            </button>
            <button type="button" aria-label="Scroll down" className={clsx(chip, "flex-1")}>
              <Icon shapes={[["M3 5l5 5 5-5", "#4d6185", N, 3]]} className="size-[5px]" />
            </button>
          </div>
        </div>
        <div className="flex h-[13px] items-center">
          <label htmlFor="command" className="pl-px leading-[13px]">
            命令:
          </label>
          <input id="command" className="h-full min-w-0 flex-1 bg-transparent outline-none" />
          <div className="mr-[9px] flex h-[11px] w-[41px] justify-between bg-[#f3f3ee]">
            <button type="button" aria-label="Scroll left" className={clsx(chip, "w-[9px]")}>
              <Icon shapes={[["M10 3L5 8l5 5", "#4d6185", N, 3]]} className="size-[6px]" />
            </button>
            <span className="w-[9px] bg-[#c9dafc]" />
            <span className="w-[7px]" />
            <button type="button" aria-label="Scroll right" className={clsx(chip, "w-[9px]")}>
              <Icon shapes={[["M6 3l5 5-5 5", "#4d6185", N, 3]]} className="size-[6px]" />
            </button>
          </div>
        </div>
      </div>
    </div>
  );
}

const toggles: [string, boolean][] = [
  ["捕捉", true],
  ["栅格", false],
  ["正交", false],
  ["极轴", false],
  ["对象捕捉", true],
  ["对象追踪", true],
  ["DUCS", false],
  ["DYN", false],
  ["线宽", false],
  ["模型", true],
];

function StatusBar() {
  return (
    <footer className="flex h-[15px] items-center border-t border-b-2 border-t-[#b9b5a0] border-b-[#5f8fd8] text-[8px] leading-[11px]">
      <button type="button" className="flex w-[54px] shrink-0 items-center gap-[2px] pl-[3px] whitespace-pre">
        比例 1:100 <Caret />
      </button>
      <div className="mr-[3px] h-[12px] w-[180px] shrink-0 border border-t-[#a8a492] border-r-white border-b-white border-l-[#a8a492] pl-px whitespace-pre">4.569950E+05, -3.22922E+05, 0.000000</div>
      {toggles.map(([label, on]) => (
        <button
          key={label}
          type="button"
          aria-pressed={on}
          className={clsx(
            "h-[12px] shrink-0 border",
            label.length === 4 && label !== "DUCS" ? "w-[35px]" : "w-[20px]",
            on ? "border-t-[#666] border-r-white border-b-white border-l-[#666] bg-[#f4f2ea]" : "border-t-white border-r-[#b5b19c] border-b-[#b5b19c] border-l-white",
          )}
        >
          {label}
        </button>
      ))}
      <div className="ml-auto flex items-center gap-[3px] pr-[8px]">
        {trayIcons.map((icon) => (
          <ToolButton key={icon[0]} icon={icon} />
        ))}
        <button type="button" aria-label="Status bar menu" className="mx-[3px]">
          <Caret />
        </button>
        <ToolButton icon={["Clean screen", [["M1 1h14v14H1z", "#345f9c", "#8fb6e8", 2], ["M4 4h8v8H4z", N, "#a8caf4"]]]} />
      </div>
    </footer>
  );
}

export default function App() {
  return (
    <div className="relative flex min-h-screen flex-col overflow-hidden bg-[#ece9d8] font-['Noto_Sans_Mono_CJK_SC','Liberation_Mono','Noto_Sans_CJK_SC',monospace] text-black">
      <TitleBar />
      <InputMethodBar />
      <MenuBar />
      <StandardToolbar />
      <LayerToolbar />
      <div className="flex flex-1">
        <SideMenu />
        <main className="flex min-w-0 flex-1 flex-col">
          <div className="flex flex-1">
            <DrawBar />
            <div className="mr-px flex min-w-0 flex-1 flex-col self-stretch border-r border-[#fbfaf4]">
              <DocumentTabs />
              <ModelSpace />
              <LayoutTabs />
            </div>
            <ModifyBar />
          </div>
          <HvacToolbar />
          <CommandWindow />
        </main>
      </div>
      <StatusBar />
    </div>
  );
}
